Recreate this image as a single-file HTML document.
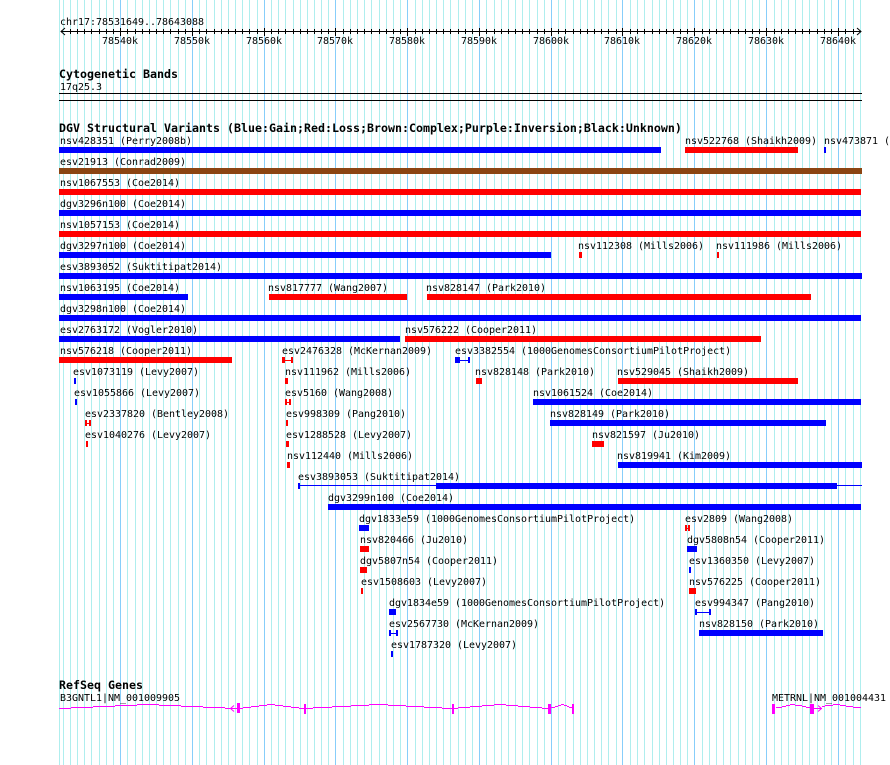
<!DOCTYPE html>
<html><head><meta charset="utf-8"><style>
html,body{margin:0;padding:0;background:#fff;width:890px;height:765px;overflow:hidden}
svg{display:block}
text{font-family:"DejaVu Sans Mono","Liberation Mono",monospace;font-size:9.97px;fill:#000;white-space:pre}
text.b{font-family:"DejaVu Sans Mono","Liberation Mono",monospace;font-weight:bold;font-size:11.63px}
.r{fill:#f00}.u{fill:#00f}.n{fill:#8b4513}
</style></head><body>
<svg width="890" height="765" viewBox="0 0 890 765" xmlns="http://www.w3.org/2000/svg">
<g shape-rendering="crispEdges">
<path fill="none" stroke="#afeeee" stroke-width="1" d="M59.5 0V765M63.5 0V765M70.5 0V765M77.5 0V765M84.5 0V765M91.5 0V765M99.5 0V765M106.5 0V765M113.5 0V765M127.5 0V765M135.5 0V765M142.5 0V765M149.5 0V765M156.5 0V765M163.5 0V765M170.5 0V765M178.5 0V765M185.5 0V765M199.5 0V765M206.5 0V765M214.5 0V765M221.5 0V765M228.5 0V765M235.5 0V765M242.5 0V765M249.5 0V765M257.5 0V765M271.5 0V765M278.5 0V765M285.5 0V765M293.5 0V765M300.5 0V765M307.5 0V765M314.5 0V765M321.5 0V765M328.5 0V765M343.5 0V765M350.5 0V765M357.5 0V765M364.5 0V765M371.5 0V765M379.5 0V765M386.5 0V765M393.5 0V765M400.5 0V765M415.5 0V765M422.5 0V765M429.5 0V765M436.5 0V765M443.5 0V765M450.5 0V765M458.5 0V765M465.5 0V765M472.5 0V765M486.5 0V765M494.5 0V765M501.5 0V765M508.5 0V765M515.5 0V765M522.5 0V765M529.5 0V765M537.5 0V765M544.5 0V765M558.5 0V765M565.5 0V765M573.5 0V765M580.5 0V765M587.5 0V765M594.5 0V765M601.5 0V765M608.5 0V765M616.5 0V765M630.5 0V765M637.5 0V765M644.5 0V765M652.5 0V765M659.5 0V765M666.5 0V765M673.5 0V765M680.5 0V765M687.5 0V765M702.5 0V765M709.5 0V765M716.5 0V765M723.5 0V765M730.5 0V765M738.5 0V765M745.5 0V765M752.5 0V765M759.5 0V765M774.5 0V765M781.5 0V765M788.5 0V765M795.5 0V765M802.5 0V765M809.5 0V765M817.5 0V765M824.5 0V765M831.5 0V765M845.5 0V765M853.5 0V765M860.5 0V765"/>
<path fill="none" stroke="#87cefa" stroke-width="1" d="M120.5 0V765M192.5 0V765M264.5 0V765M335.5 0V765M407.5 0V765M479.5 0V765M551.5 0V765M622.5 0V765M694.5 0V765M766.5 0V765M838.5 0V765"/>
<path fill="none" stroke="#000" stroke-width="1" d="M61 31.5H861M59 93.5H862M59 100.5H862
M70.5 29V34M77.5 29V34M84.5 29V34M91.5 29V34M99.5 29V34M106.5 29V34M113.5 29V34M127.5 29V34M135.5 29V34M142.5 29V34M149.5 29V34M156.5 29V34M163.5 29V34M170.5 29V34M178.5 29V34M185.5 29V34M199.5 29V34M206.5 29V34M214.5 29V34M221.5 29V34M228.5 29V34M235.5 29V34M242.5 29V34M249.5 29V34M257.5 29V34M271.5 29V34M278.5 29V34M285.5 29V34M293.5 29V34M300.5 29V34M307.5 29V34M314.5 29V34M321.5 29V34M328.5 29V34M343.5 29V34M350.5 29V34M357.5 29V34M364.5 29V34M371.5 29V34M379.5 29V34M386.5 29V34M393.5 29V34M400.5 29V34M415.5 29V34M422.5 29V34M429.5 29V34M436.5 29V34M443.5 29V34M450.5 29V34M458.5 29V34M465.5 29V34M472.5 29V34M486.5 29V34M494.5 29V34M501.5 29V34M508.5 29V34M515.5 29V34M522.5 29V34M529.5 29V34M537.5 29V34M544.5 29V34M558.5 29V34M565.5 29V34M573.5 29V34M580.5 29V34M587.5 29V34M594.5 29V34M601.5 29V34M608.5 29V34M616.5 29V34M630.5 29V34M637.5 29V34M644.5 29V34M652.5 29V34M659.5 29V34M666.5 29V34M673.5 29V34M680.5 29V34M687.5 29V34M702.5 29V34M709.5 29V34M716.5 29V34M723.5 29V34M730.5 29V34M738.5 29V34M745.5 29V34M752.5 29V34M759.5 29V34M774.5 29V34M781.5 29V34M788.5 29V34M795.5 29V34M802.5 29V34M809.5 29V34M817.5 29V34M824.5 29V34M831.5 29V34M845.5 29V34M853.5 29V34
M120.5 28V36M192.5 28V36M264.5 28V36M335.5 28V36M407.5 28V36M479.5 28V36M551.5 28V36M622.5 28V36M694.5 28V36M766.5 28V36M838.5 28V36"/>
</g>
<path fill="none" stroke="#000" stroke-width="1" d="M65 28L61 31.5L65 35M857 28L861 31.5L857 35"/>
<g>
<text x="60" y="25">chr17:78531649..78643088</text>
<text x="102" y="44">78540k</text><text x="174" y="44">78550k</text><text x="246" y="44">78560k</text><text x="317" y="44">78570k</text><text x="389" y="44">78580k</text><text x="461" y="44">78590k</text><text x="533" y="44">78600k</text><text x="604" y="44">78610k</text><text x="676" y="44">78620k</text><text x="748" y="44">78630k</text><text x="820" y="44">78640k</text>
<text class="b" x="59" y="78">Cytogenetic Bands</text>
<text x="60" y="90">17q25.3</text>
<text class="b" x="59" y="132">DGV Structural Variants (Blue:Gain;Red:Loss;Brown:Complex;Purple:Inversion;Black:Unknown)</text>
<text class="b" x="59" y="689">RefSeq Genes</text>
<text x="60" y="701">B3GNTL1|NM_001009905</text>
<text x="772" y="701">METRNL|NM_001004431</text>

<text x="60" y="144">nsv428351 (Perry2008b)</text>
<text x="685" y="144">nsv522768 (Shaikh2009)</text>
<text x="824" y="144">nsv473871 (</text>
<text x="60" y="165">esv21913 (Conrad2009)</text>
<text x="60" y="186">nsv1067553 (Coe2014)</text>
<text x="60" y="207">dgv3296n100 (Coe2014)</text>
<text x="60" y="228">nsv1057153 (Coe2014)</text>
<text x="60" y="249">dgv3297n100 (Coe2014)</text>
<text x="578" y="249">nsv112308 (Mills2006)</text>
<text x="716" y="249">nsv111986 (Mills2006)</text>
<text x="60" y="270">esv3893052 (Suktitipat2014)</text>
<text x="60" y="291">nsv1063195 (Coe2014)</text>
<text x="268" y="291">nsv817777 (Wang2007)</text>
<text x="426" y="291">nsv828147 (Park2010)</text>
<text x="60" y="312">dgv3298n100 (Coe2014)</text>
<text x="60" y="333">esv2763172 (Vogler2010)</text>
<text x="405" y="333">nsv576222 (Cooper2011)</text>
<text x="60" y="354">nsv576218 (Cooper2011)</text>
<text x="282" y="354">esv2476328 (McKernan2009)</text>
<text x="455" y="354">esv3382554 (1000GenomesConsortiumPilotProject)</text>
<text x="73" y="375">esv1073119 (Levy2007)</text>
<text x="285" y="375">nsv111962 (Mills2006)</text>
<text x="475" y="375">nsv828148 (Park2010)</text>
<text x="617" y="375">nsv529045 (Shaikh2009)</text>
<text x="74" y="396">esv1055866 (Levy2007)</text>
<text x="285" y="396">esv5160 (Wang2008)</text>
<text x="533" y="396">nsv1061524 (Coe2014)</text>
<text x="85" y="417">esv2337820 (Bentley2008)</text>
<text x="286" y="417">esv998309 (Pang2010)</text>
<text x="550" y="417">nsv828149 (Park2010)</text>
<text x="85" y="438">esv1040276 (Levy2007)</text>
<text x="286" y="438">esv1288528 (Levy2007)</text>
<text x="592" y="438">nsv821597 (Ju2010)</text>
<text x="287" y="459">nsv112440 (Mills2006)</text>
<text x="617" y="459">nsv819941 (Kim2009)</text>
<text x="298" y="480">esv3893053 (Suktitipat2014)</text>
<text x="328" y="501">dgv3299n100 (Coe2014)</text>
<text x="359" y="522">dgv1833e59 (1000GenomesConsortiumPilotProject)</text>
<text x="685" y="522">esv2809 (Wang2008)</text>
<text x="360" y="543">nsv820466 (Ju2010)</text>
<text x="687" y="543">dgv5808n54 (Cooper2011)</text>
<text x="360" y="564">dgv5807n54 (Cooper2011)</text>
<text x="689" y="564">esv1360350 (Levy2007)</text>
<text x="361" y="585">esv1508603 (Levy2007)</text>
<text x="689" y="585">nsv576225 (Cooper2011)</text>
<text x="389" y="606">dgv1834e59 (1000GenomesConsortiumPilotProject)</text>
<text x="695" y="606">esv994347 (Pang2010)</text>
<text x="389" y="627">esv2567730 (McKernan2009)</text>
<text x="699" y="627">nsv828150 (Park2010)</text>
<text x="391" y="648">esv1787320 (Levy2007)</text>
</g>
<g shape-rendering="crispEdges">
<rect class="u" x="59" y="147" width="602" height="6"/>
<rect class="r" x="685" y="147" width="113" height="6"/>
<rect class="u" x="824" y="147" width="2" height="6"/>
<rect class="n" x="59" y="168" width="803" height="6"/>
<rect class="r" x="59" y="189" width="802" height="6"/>
<rect class="u" x="59" y="210" width="802" height="6"/>
<rect class="r" x="59" y="231" width="802" height="6"/>
<rect class="u" x="59" y="252" width="492" height="6"/>
<rect class="r" x="579" y="252" width="3" height="6"/>
<rect class="r" x="717" y="252" width="2" height="6"/>
<rect class="u" x="59" y="273" width="803" height="6"/>
<rect class="u" x="59" y="294" width="129" height="6"/>
<rect class="r" x="269" y="294" width="138" height="6"/>
<rect class="r" x="427" y="294" width="384" height="6"/>
<rect class="u" x="59" y="315" width="802" height="6"/>
<rect class="u" x="59" y="336" width="341" height="6"/>
<rect class="r" x="405" y="336" width="356" height="6"/>
<rect class="r" x="59" y="357" width="173" height="6"/>
<path class="r" d="M282 357h3v3h6v-3h2v6h-2v-2h-6v2h-3z"/>
<path class="u" d="M455 357h5v3h8v-3h2v6h-2v-2h-8v2h-5z"/>
<rect class="u" x="74" y="378" width="2" height="6"/>
<rect class="r" x="285" y="378" width="3" height="6"/>
<rect class="r" x="476" y="378" width="6" height="6"/>
<rect class="r" x="618" y="378" width="180" height="6"/>
<rect class="u" x="75" y="399" width="2" height="6"/>
<path class="r" d="M285 399h2v3h2v-3h2v6h-2v-2h-2v2h-2z"/>
<rect class="u" x="533" y="399" width="328" height="6"/>
<path class="r" d="M85 420h2v3h2v-3h2v6h-2v-2h-2v2h-2z"/>
<rect class="r" x="286" y="420" width="2" height="6"/>
<rect class="u" x="550" y="420" width="276" height="6"/>
<rect class="r" x="86" y="441" width="2" height="6"/>
<rect class="r" x="286" y="441" width="3" height="6"/>
<rect class="r" x="592" y="441" width="12" height="6"/>
<rect class="r" x="287" y="462" width="3" height="6"/>
<rect class="u" x="618" y="462" width="244" height="6"/>
<rect class="u" x="298" y="483" width="2" height="6"/>
<rect class="u" x="298" y="485" width="564" height="1"/>
<rect class="u" x="436" y="483" width="401" height="6"/>
<rect class="u" x="328" y="504" width="533" height="6"/>
<rect class="u" x="359" y="525" width="10" height="6"/>
<path class="r" d="M685 525h2v3h1v-3h2v6h-2v-2h-1v2h-2z"/>
<rect class="r" x="360" y="546" width="9" height="6"/>
<rect class="u" x="687" y="546" width="10" height="6"/>
<rect class="r" x="360" y="567" width="7" height="6"/>
<rect class="u" x="689" y="567" width="2" height="6"/>
<rect class="r" x="361" y="588" width="2" height="6"/>
<rect class="r" x="689" y="588" width="7" height="6"/>
<rect class="u" x="389" y="609" width="7" height="6"/>
<path class="u" d="M695 609h2v3h12v-3h2v6h-2v-2h-12v2h-2z"/>
<path class="u" d="M389 630h2v3h5v-3h2v6h-2v-2h-5v2h-2z"/>
<rect class="u" x="699" y="630" width="124" height="6"/>
<rect class="u" x="391" y="651" width="2" height="6"/>

<path fill="none" stroke="#f0f" stroke-width="1" d="M59 708.5H71M71 707.5H93M93 706.5H115M115 705.5H137M137 704.5H159M159 705.5H181M181 706.5H203M203 707.5H225M225 708.5H240M240 708.5H243M243 707.5H251M251 706.5H259M259 705.5H267M267 704.5H275M275 705.5H283M283 706.5H291M291 707.5H299M299 708.5H313M313 707.5H332M332 706.5H351M351 705.5H369M369 704.5H388M388 705.5H406M406 706.5H424M424 707.5H442M442 708.5H458M458 707.5H470M470 706.5H482M482 705.5H494M494 704.5H506M506 705.5H518M518 706.5H530M530 707.5H542M542 708.5H551M551 707.5H555M555 706.5H558M558 705.5H561M561 704.5H564M564 705.5H567M567 706.5H569M569 707.5H573M776 707.5H782M782 706.5H786M786 705.5H790M790 704.5H795M795 705.5H802M802 706.5H806M806 707.5H810M814 708.5H822M822 706.5H825M825 705.5H833M833 704.5H840M840 705.5H846M846 706.5H853M853 707.5H861"/>
<path fill="#f0f" d="M237 703h3v10h-3zM304 704h2v10h-2zM452 704h2v10h-2zM548 704h3v10h-3zM572 704h2v10h-2zM772 704h3v10h-3zM810 704h4v10h-4z"/>
</g>
<path fill="none" stroke="#f0f" stroke-width="1" d="M234 705.5L230.5 708.5L234 711.5M818 705.5L821.5 708.5L818 711.5"/>
</svg>
</body></html>
